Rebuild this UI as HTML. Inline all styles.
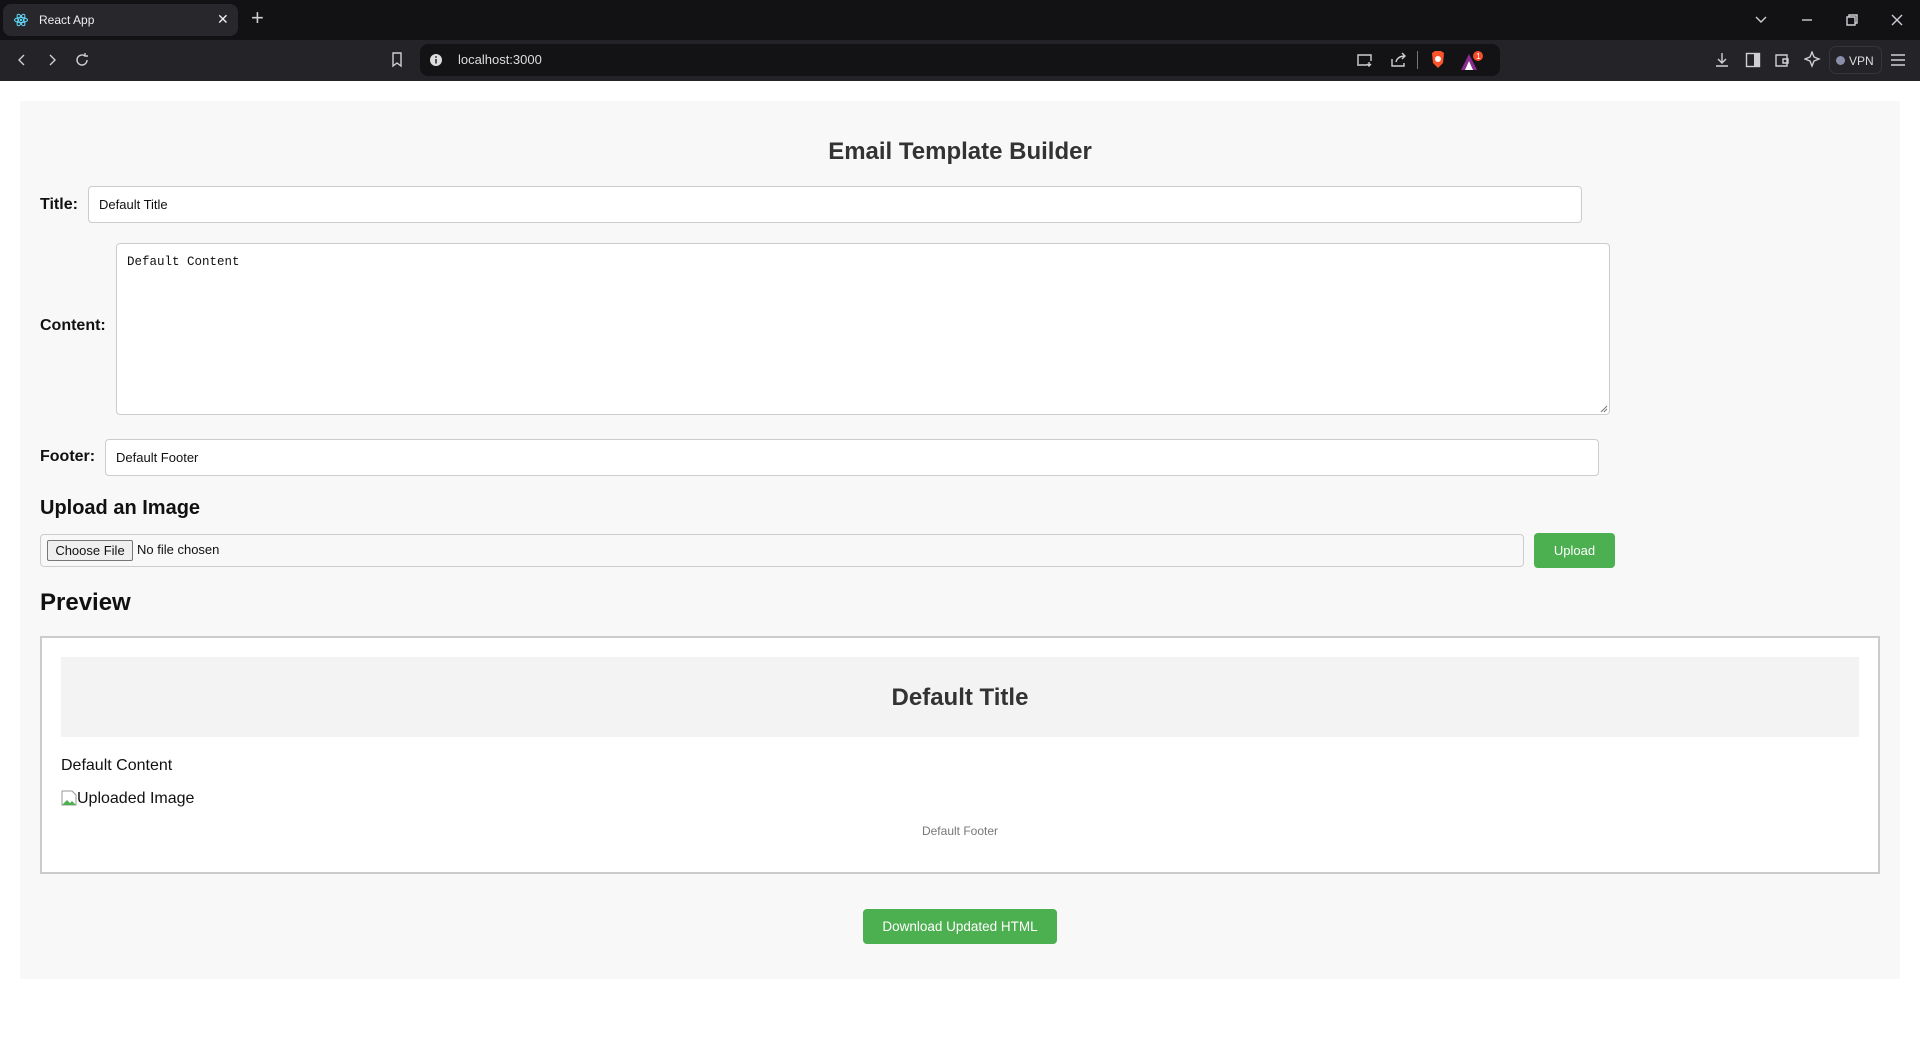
<!DOCTYPE html>
<html><head><meta charset="utf-8"><style>
*{box-sizing:border-box;margin:0;padding:0}
body{width:1920px;height:1040px;background:#fff;font-family:"Liberation Sans",Arial,sans-serif;position:relative;overflow:hidden}
.abs{position:absolute}
.tabbar{left:0;top:0;width:1920px;height:40px;background:#121215}
.toolbar{left:0;top:40px;width:1920px;height:41px;background:#232328}
.tab{left:3px;top:4px;width:235px;height:32px;background:#27272c;border-radius:8px;color:#eee;font-size:12px}
.addr{left:420px;top:44px;width:1080px;height:32px;background:#131316;border-radius:8px;color:#ddd;font-size:13px}
.ico{stroke:#cfcfd4;fill:none;stroke-width:1.4}
.wrap{left:20px;top:101px;width:1880px;height:878px;background:#f8f8f8}
label,.lbl{position:absolute;font-weight:bold;font-size:16px;color:#111}
.inp{position:absolute;background:#fff;border:1px solid #ccc;border-radius:4px;font-size:13px;color:#111}
.btn{position:absolute;background:#4caf50;color:#fff;border-radius:4px;text-align:center}
</style></head><body>
<div class="abs tabbar"></div>
<div class="abs tab">
<svg class="abs" style="left:11px;top:9px" width="14" height="14" viewBox="0 0 14 14"><g fill="none" stroke="#61dafb" stroke-width="1"><ellipse cx="7" cy="7" rx="6.5" ry="2.5"/><ellipse cx="7" cy="7" rx="6.5" ry="2.5" transform="rotate(60 7 7)"/><ellipse cx="7" cy="7" rx="6.5" ry="2.5" transform="rotate(120 7 7)"/></g><circle cx="7" cy="7" r="1.2" fill="#61dafb"/></svg>
<span class="abs" style="left:36px;top:9px">React App</span>
<span class="abs" style="left:214px;top:7px;font-size:14px">✕</span>
</div>
<span class="abs" style="left:251px;top:5px;color:#ccc;font-size:22px;font-weight:300">+</span>
<svg class="abs" style="left:1754px;top:13px" width="14" height="14"><path class="ico" d="M2 4l5 5 5-5"/></svg>
<svg class="abs" style="left:1800px;top:13px" width="14" height="14"><path class="ico" d="M2 7h10"/></svg>
<svg class="abs" style="left:1845px;top:13px" width="14" height="14"><path class="ico" d="M2 4h8v8H2zM4 4V2h8v8h-2"/></svg>
<svg class="abs" style="left:1890px;top:13px" width="14" height="14"><path class="ico" d="M2 2l10 10M12 2L2 12"/></svg>

<div class="abs toolbar"></div>
<svg class="abs" style="left:15px;top:53px" width="14" height="14"><path class="ico" stroke="#888" d="M9 2L4 7l5 5"/></svg>
<svg class="abs" style="left:45px;top:53px" width="14" height="14"><path class="ico" stroke="#888" d="M5 2l5 5-5 5"/></svg>
<svg class="abs" style="left:74px;top:52px" width="16" height="16"><path class="ico" stroke-width="1.8" d="M13 8a5 5 0 1 1-2-4M11 1v3h3"/></svg>
<svg class="abs" style="left:390px;top:51px" width="14" height="18"><path class="ico" d="M3 2h8v13l-4-3-4 3z"/></svg>
<div class="abs addr">
<svg class="abs" style="left:9px;top:9px" width="14" height="14"><circle cx="7" cy="7" r="6" fill="#ddd"/><rect x="6.3" y="6" width="1.4" height="4.5" fill="#131316"/><circle cx="7" cy="4" r="0.9" fill="#131316"/></svg>
<span class="abs" style="left:38px;top:8px">localhost:3000</span>
<svg class="abs" style="left:936px;top:8px" width="18" height="16"><path class="ico" d="M2 12V3h13v6M1 13h10M13 10v4M11 12l2 2 2-2"/></svg>
<svg class="abs" style="left:970px;top:7px" width="18" height="17"><path class="ico" d="M2 8v7h12v-3M6 11c1-4 4-6 9-6M12 2l3 3-3 3"/></svg>
<div class="abs" style="left:997px;top:7px;width:1px;height:18px;background:#777"></div>
<svg class="abs" style="left:1010px;top:6px" width="16" height="20"><path d="M2 3l3-2h6l3 2-1 10-5 5-5-5z" fill="#fb542b"/><circle cx="8" cy="9" r="3" fill="#fff"/></svg>
<svg class="abs" style="left:1040px;top:7px" width="26" height="20"><path d="M1 19L9 3l8 16z" fill="#8a2c8e"/><path d="M5 19L9 10l4 9z" fill="#fff"/><circle cx="18" cy="5" r="5" fill="#f54d2d"/><text x="16.3" y="8" font-size="8" fill="#fff" font-family="Liberation Sans">1</text></svg>
</div>
<svg class="abs" style="left:1714px;top:51px" width="16" height="18"><path class="ico" d="M8 2v10M4 8l4 4 4-4M2 15h12"/></svg>
<svg class="abs" style="left:1745px;top:52px" width="16" height="16"><rect class="ico" x="1.5" y="1.5" width="13" height="13"/><rect x="9" y="2" width="5" height="12" fill="#cfcfd4"/></svg>
<svg class="abs" style="left:1774px;top:52px" width="16" height="16"><path class="ico" d="M2 3h11v11H2zM9 7h5v4H9z"/></svg>
<svg class="abs" style="left:1804px;top:51px" width="18" height="18"><path class="ico" d="M8 1l2 5 5 2-5 2-2 5-2-5-5-2 5-2z"/></svg>
<div class="abs" style="left:1829px;top:46px;width:53px;height:28px;border:1px solid #35353b;border-radius:7px;color:#ddd;font-size:12px"><span class="abs" style="left:6px;top:9px;width:9px;height:9px;border-radius:50%;background:#8a8ea8"></span><span class="abs" style="left:19px;top:7px">VPN</span></div>
<svg class="abs" style="left:1890px;top:52px" width="16" height="16"><path class="ico" d="M1 3h14M1 8h14M1 13h14"/></svg>

<div class="abs wrap"></div>
<div class="abs" style="left:0;width:1920px;top:138px;text-align:center;font-size:24px;font-weight:bold;color:#333">Email Template Builder</div>

<label style="left:40px;top:196px">Title:</label>
<div class="inp" style="left:88px;top:186px;width:1494px;height:37px"><span class="abs" style="left:10px;top:10px">Default Title</span></div>

<label style="left:40px;top:317px">Content:</label>
<div class="inp" style="left:116px;top:243px;width:1494px;height:172px"><span class="abs" style="left:10px;top:11px;font-family:'Liberation Mono',monospace;font-size:12.5px">Default Content</span>
<svg class="abs" style="right:1px;bottom:1px" width="9" height="9"><path d="M8 2L2 8M8 5L5 8" stroke="#777" stroke-width="1"/></svg></div>

<label style="left:40px;top:448px">Footer:</label>
<div class="inp" style="left:105px;top:439px;width:1494px;height:37px"><span class="abs" style="left:10px;top:10px">Default Footer</span></div>

<div class="lbl" style="left:40px;top:497px;font-size:20px">Upload an Image</div>
<div class="abs" style="left:40px;top:534px;width:1484px;height:33px;border:1px solid #ccc;border-radius:4px;background:#f8f8f8"></div>
<div class="abs" style="left:47px;top:540px;width:86px;height:21px;border:1px solid #767676;border-radius:2px;background:#efefef;font-size:13px;color:#111;text-align:center;line-height:19px">Choose File</div>
<span class="abs" style="left:137px;top:542px;font-size:13px;color:#111">No file chosen</span>
<div class="btn" style="left:1534px;top:533px;width:81px;height:35px;line-height:35px;font-size:13px">Upload</div>

<div class="lbl" style="left:40px;top:589px;font-size:24px">Preview</div>
<div class="abs" style="left:40px;top:636px;width:1840px;height:238px;border:2px solid #ccc;background:#fff"></div>
<div class="abs" style="left:61px;top:657px;width:1798px;height:80px;background:#f3f3f3;text-align:center;font-size:24px;font-weight:bold;color:#333;line-height:82px">Default Title</div>
<span class="abs" style="left:61px;top:757px;font-size:16px;color:#111">Default Content</span>
<svg class="abs" style="left:61px;top:790px" width="16" height="16"><path d="M1 1h10l4 4v10H1z" fill="#fff" stroke="#999"/><path d="M1 15l5-5 3 3 2-2 4 4z" fill="#4caf50"/></svg>
<span class="abs" style="left:77px;top:790px;font-size:16px;color:#111">Uploaded Image</span>
<div class="abs" style="left:0;width:1920px;top:824px;text-align:center;font-size:12px;color:#777">Default Footer</div>

<div class="btn" style="left:863px;top:909px;width:194px;height:35px;line-height:35px;font-size:13.5px">Download Updated HTML</div>
</body></html>
